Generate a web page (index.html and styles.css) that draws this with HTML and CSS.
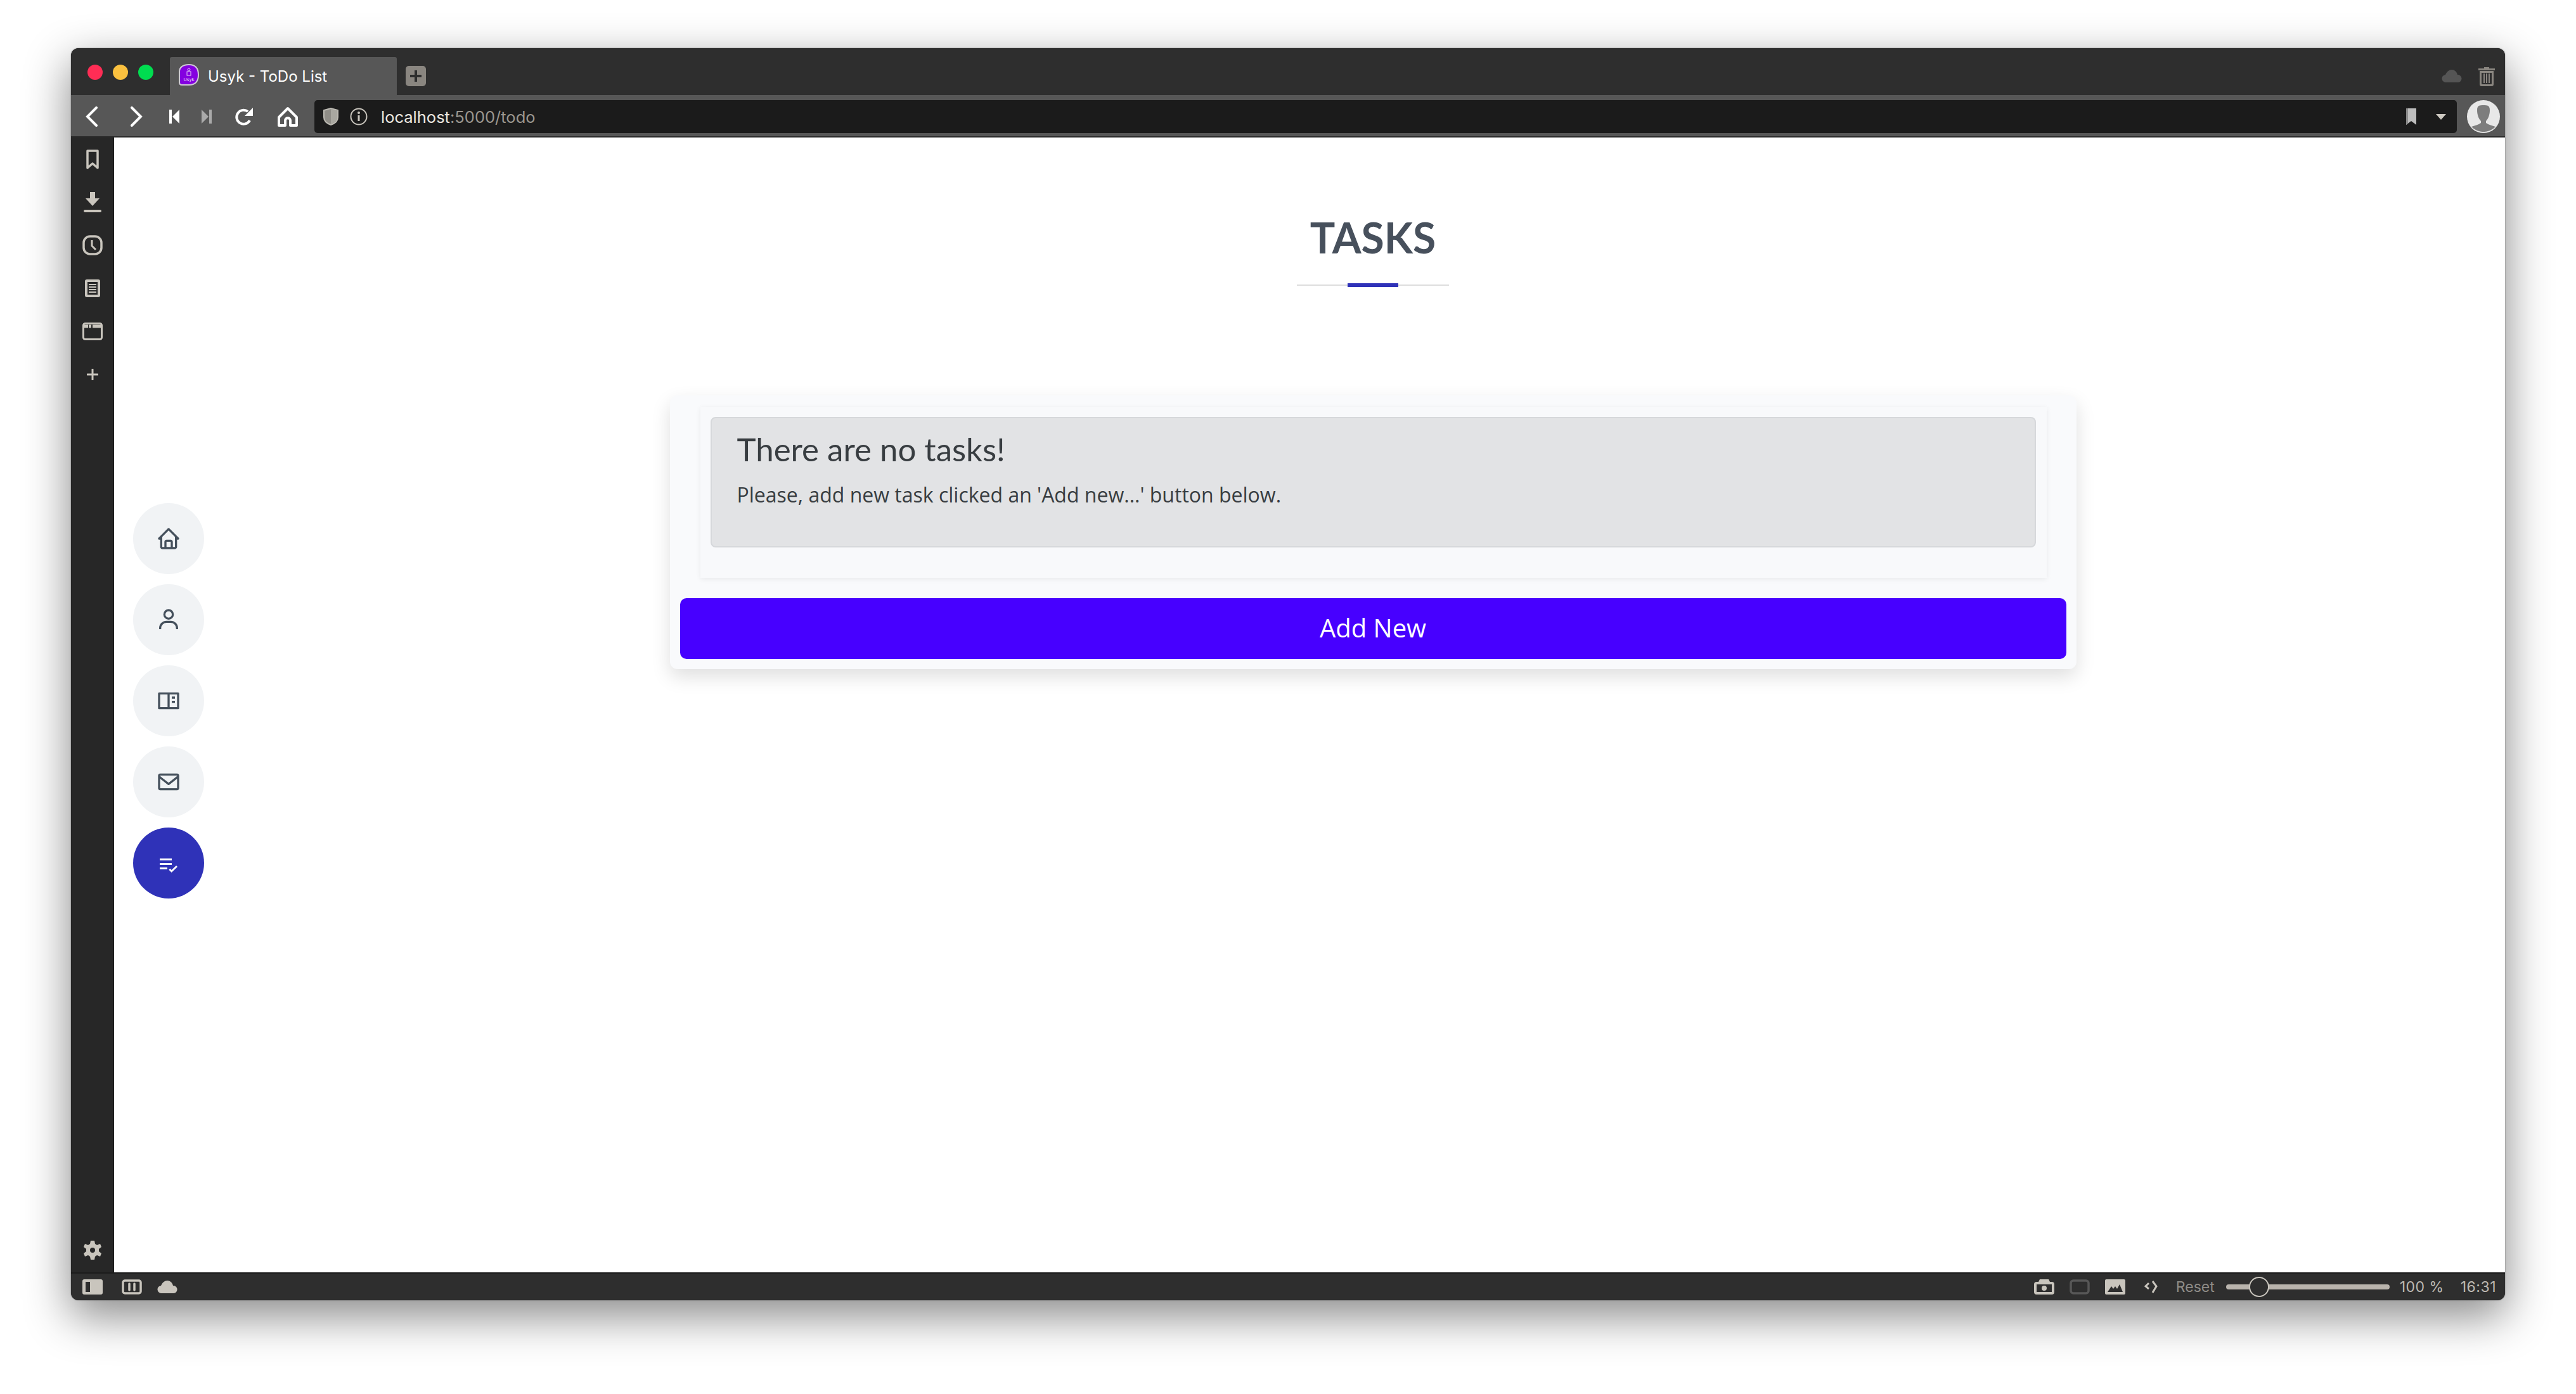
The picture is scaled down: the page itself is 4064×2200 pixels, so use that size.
FILE: index.html
```html
<!DOCTYPE html>
<html lang="en">
<head>
    <meta charset="UTF-8">
    <title>Usyk - ToDo List</title>
    <link rel="stylesheet" href="styles.css">
</head>
<body>
    <div class="window">
        <!-- tab strip -->
        <div class="tabbar">
            <div class="lights">
                <span class="light red"></span>
                <span class="light yellow"></span>
                <span class="light green"></span>
            </div>
            <div class="tab">
                <svg class="favicon" viewBox="0 0 32 34">
                    <path d="M1 12C1 5 7 1 16 1s15 4 15 16-7 16-15 16H5c-3 0-4-1-4-4z" fill="#8400e0" stroke="#cfc6d6" stroke-width="2"/>
                    <circle cx="16" cy="9" r="2" fill="none" stroke="#e6d0f5"/>
                    <rect x="13" y="12" width="6" height="6" fill="none" stroke="#e6d0f5"/>
                    <text x="16" y="27" font-size="8" text-anchor="middle" fill="#e6d0f5" font-family="Roboto, sans-serif">Usyk</text>
                </svg>
                <span class="tab-title">Usyk - ToDo List</span>
            </div>
            <div class="new-tab">
                <svg viewBox="0 0 32 32" width="32" height="32"><path d="M16 7v18M7 16h18" stroke="#2e2e2e" stroke-width="4"/></svg>
            </div>
            <div class="tabbar-right">
                <svg viewBox="0 0 32 20" width="32" height="20"><path d="M7 20a6 6 0 0 1-1-12c2-5 6-8 10-8s8 3 9 8a6 6 0 0 1 1 12z" fill="#555"/></svg>
                <svg viewBox="0 0 26 32" width="26" height="32"><path d="M9 2h8v2h9v3H0V4h9zM2 8h22v21c0 2-1 3-3 3H5c-2 0-3-1-3-3zm3 3v16c0 1 0 2 1 2h14c1 0 1-1 1-2V11zm3 1h2v15H8zm4 0h2v15h-2zm4 0h2v15h-2z" fill="#8a8680"/></svg>
            </div>
        </div>

        <!-- toolbar -->
        <div class="toolbar">
            <div class="nav-btns">
                <svg class="btn-back" viewBox="0 0 20 32" width="20" height="32"><path d="M17 2 3 16l14 14" fill="none" stroke="#fff" stroke-width="4" stroke-linecap="round"/></svg>
                <svg class="btn-forward" viewBox="0 0 20 32" width="20" height="32"><path d="m3 2 14 14L3 30" fill="none" stroke="#fff" stroke-width="4" stroke-linecap="round"/></svg>
                <svg class="btn-first" viewBox="0 0 17 24" width="17" height="24"><path d="M1 1h4v22H1zM17 1v22L6 12z" fill="#fff"/></svg>
                <svg class="btn-last" viewBox="0 0 17 24" width="17" height="24"><path d="M12 1h4v22h-4zM0 1v22l11-11z" fill="#aaa"/></svg>
                <svg class="btn-reload" viewBox="0 0 30 30" width="30" height="30"><path d="M24 21a11 11 0 1 1-3-14" fill="none" stroke="#fff" stroke-width="4"/><path d="M29 1v13H16z" fill="#fff"/></svg>
                <svg class="btn-home" viewBox="0 0 32 32" width="32" height="32"><path d="M16 3 2 17v13h10v-8c0-5 8-5 8 0v8h10V17z" fill="none" stroke="#fff" stroke-width="4" stroke-linejoin="round"/></svg>
            </div>
            <div class="address">
                <svg viewBox="0 0 24 28" width="24" height="28"><path d="M12 1 1 4v11c0 6 5 10 11 12 6-2 11-6 11-12V4z" fill="#8f8d87" stroke="#bdbab3" stroke-width="2"/><path d="M12 2v24c5-2 10-5 10-11V4z" fill="#a9a7a0"/></svg>
                <svg class="info" viewBox="0 0 28 28" width="28" height="28"><circle cx="14" cy="14" r="12.5" fill="none" stroke="#c9c5bd" stroke-width="2"/><path d="M14 12v9" stroke="#c9c5bd" stroke-width="3"/><circle cx="14" cy="8" r="2" fill="#c9c5bd"/></svg>
                <span class="url"><span class="url-host">localhost</span>:5000/todo</span>
                <svg class="addr-mark" viewBox="0 0 16 26" width="16" height="26"><path d="M0 0h16v26l-8-6-8 6z" fill="#bdbdbd"/><path d="M0 0h3v24l-3 2z" fill="#8c8c8c"/></svg>
                <svg class="addr-arrow" viewBox="0 0 16 9" width="16" height="9"><path d="M0 0h16L8 9z" fill="#cdc9c1"/></svg>
            </div>
            <svg class="avatar" viewBox="0 0 52 52" width="52" height="52">
                <circle cx="26" cy="26" r="26" fill="#e8e8e8"/>
                <path d="M16 16c0-8 4-8 10-8s10 0 10 8c0 8-3 14-6 17v3c4 3 10 4 15 6a26 26 0 0 1-38 0c5-2 11-3 15-6v-3c-3-3-6-9-6-17z" fill="#7d7d7d"/>
            </svg>
        </div>

        <div class="main">
            <!-- browser side panel -->
            <div class="sidebar">
                <div class="side-icon"><svg viewBox="0 0 20 31" width="20" height="31"><path d="M2 2h16v27l-8-7-8 7z" fill="none" stroke="#c9c5bd" stroke-width="3.5" stroke-linejoin="round"/></svg></div>
                <div class="side-icon"><svg viewBox="0 0 28 32" width="28" height="32"><path d="M10 0h8v10h7L14 22 3 10h7z" fill="#c9c5bd"/><rect y="28" width="28" height="4" rx="2" fill="#c9c5bd"/></svg></div>
                <div class="side-icon"><svg viewBox="0 0 32 32" width="32" height="32"><rect x="2" y="2" width="28" height="28" rx="10" fill="none" stroke="#c9c5bd" stroke-width="3.5"/><path d="M15 8v9l6 6" fill="none" stroke="#c9c5bd" stroke-width="3"/></svg></div>
                <div class="side-icon"><svg viewBox="0 0 24 28" width="24" height="28"><rect width="24" height="28" rx="3" fill="#c9c5bd"/><rect x="4" y="4" width="16" height="20" fill="#272727"/><path d="M6 8h12M6 12h12M6 16h12M6 20h12" stroke="#c9c5bd" stroke-width="2"/></svg></div>
                <div class="side-icon"><svg viewBox="0 0 32 28" width="32" height="28"><rect x="1.500" y="1.500" width="29" height="25" rx="3" fill="none" stroke="#c9c5bd" stroke-width="3"/><path d="M3 6h27" stroke="#c9c5bd" stroke-width="5" stroke-dasharray="6 1 4 2 20"/></svg></div>
                <div class="side-icon"><svg viewBox="0 0 18 18" width="18" height="18"><path d="M9 1v16M1 9h16" stroke="#c9c5bd" stroke-width="3" stroke-linecap="round"/></svg></div>
                <div class="side-gear">
                    <svg viewBox="0 0 28 30" width="28" height="30"><path fill-rule="evenodd" d="M11 0h6l1 5 3 2 5-2 2 5-4 3v4l4 3-2 5-5-2-3 2-1 5h-6l-1-5-3-2-5 2-2-5 4-3v-4l-4-3 2-5 5 2 3-2zm3 11a4 4 0 1 0 0 8 4 4 0 0 0 0-8z" fill="#c9c5bd"/></svg>
                </div>
            </div>

            <!-- the page itself -->
            <div class="page">
                <nav class="page-nav">
                    <a class="nav-circle"><svg viewBox="0 0 24 24" width="40" height="40"><path d="M3 13h1v7c0 1.103.897 2 2 2h12c1.103 0 2-.897 2-2v-7h1a1 1 0 0 0 .707-1.707l-9-9a.999.999 0 0 0-1.414 0l-9 9A1 1 0 0 0 3 13zm7 7v-5h4v5h-4zm2-15.586 6 6V15l.001 5H16v-5c0-1.103-.897-2-2-2h-4c-1.103 0-2 .897-2 2v5H6v-9.586l6-6z"/></svg></a>
                    <a class="nav-circle"><svg viewBox="0 0 24 24" width="40" height="40"><path d="M12 2a5 5 0 1 0 5 5 5 5 0 0 0-5-5zm0 8a3 3 0 1 1 3-3 3 3 0 0 1-3 3zm9 11v-1a7 7 0 0 0-7-7h-4a7 7 0 0 0-7 7v1h2v-1a5 5 0 0 1 5-5h4a5 5 0 0 1 5 5v1z"/></svg></a>
                    <a class="nav-circle"><svg viewBox="0 0 24 24" width="40" height="40"><path fill-rule="evenodd" d="M3 4h18a1 1 0 0 1 1 1v14a1 1 0 0 1-1 1H3a1 1 0 0 1-1-1V5a1 1 0 0 1 1-1zm1 2v12h7V6zm9 0v12h7V6zm2 2h3v2h-3zm0 4h3v2h-3z"/></svg></a>
                    <a class="nav-circle"><svg viewBox="0 0 24 24" width="40" height="40"><path d="M20 4H4c-1.103 0-2 .897-2 2v12c0 1.103.897 2 2 2h16c1.103 0 2-.897 2-2V6c0-1.103-.897-2-2-2zm0 2v.511l-8 6.223-8-6.222V6h16zM4 18V9.044l7.386 5.745a.994.994 0 0 0 1.228 0L20 9.044 20.002 18H4z"/></svg></a>
                    <a class="nav-circle active"><svg viewBox="0 0 24 24" width="40" height="40"><path d="M3.600 7.600H15v1.800H3.600zM3.600 12H15v1.800H3.600zM3.600 16.200h7.200V18H3.600z"/><path d="m12.800 17.800 2 2 5-4.800" fill="none" stroke="#fff" stroke-width="1.700"/></svg></a>
                </nav>

                <div class="content">
                    <h1 class="title">TASKS</h1>
                    <div class="title-rule"><span class="title-accent"></span></div>

                    <div class="card">
                        <div class="panel">
                            <div class="alert">
                                <h4 class="alert-title">There are no tasks!</h4>
                                <p class="alert-text">Please, add new task clicked an 'Add new...' button below.</p>
                            </div>
                        </div>
                        <button class="add-btn">Add New</button>
                    </div>
                </div>
            </div>
        </div>

        <!-- status bar -->
        <div class="statusbar">
            <svg viewBox="0 0 32 24" width="32" height="24"><path fill-rule="evenodd" d="M3 0h26a3 3 0 0 1 3 3v18a3 3 0 0 1-3 3H3a3 3 0 0 1-3-3V3a3 3 0 0 1 3-3zm2 4v16h7V4z" fill="#c9c5bd"/></svg>
            <svg class="status-tiles" viewBox="0 0 32 24" width="32" height="24"><rect x="2" y="2" width="28" height="20" rx="3" fill="none" stroke="#c9c5bd" stroke-width="3.500"/><path d="M12 7v10M20 7v10" stroke="#c9c5bd" stroke-width="3.500" stroke-linecap="round"/></svg>
            <svg class="status-cloud" viewBox="0 0 32 20" width="32" height="20"><path d="M7 20a6 6 0 0 1-1-12c2-5 6-8 10-8s8 3 9 8a6 6 0 0 1 1 12z" fill="#c9c5bd"/></svg>

            <div class="status-right">
                <svg viewBox="0 0 32 24" width="32" height="24"><path fill-rule="evenodd" d="M9 0h14l2 4h3a4 4 0 0 1 4 4v12a4 4 0 0 1-4 4H4a4 4 0 0 1-4-4V8a4 4 0 0 1 4-4h3zM4 8v12h24V8zm12 2a4 4 0 1 0 0 8 4 4 0 0 0 0-8z" fill="#c9c5bd"/></svg>
                <svg class="status-gap" viewBox="0 0 32 24" width="32" height="24"><rect x="2" y="2" width="28" height="20" rx="4" fill="none" stroke="#575757" stroke-width="3.500"/></svg>
                <svg class="status-gap" viewBox="0 0 32 24" width="32" height="24"><path fill-rule="evenodd" d="M2 0h28a2 2 0 0 1 2 2v20a2 2 0 0 1-2 2H2a2 2 0 0 1-2-2V2a2 2 0 0 1 2-2zm2 20h24l-5-12-4 7-3-4-3 4-3-4z" fill="#c9c5bd"/></svg>
                <svg class="status-code" viewBox="0 0 23 24" width="23" height="24"><path d="M8 6 3 11l5 4M14 3l6 8-6 10" fill="none" stroke="#c9c5bd" stroke-width="3"/></svg>
                <span class="status-reset">Reset</span>
                <div class="slider"><span class="slider-thumb"></span></div>
                <span class="status-text zoom-val">100 %</span>
                <span class="status-text clock">16:31</span>
            </div>
        </div>
    </div>
</body>
</html>
```

FILE: styles.css
```css
* {
    box-sizing: border-box;
}

html, body {
    margin: 0;
    height: 2200px;
    background-color: #fff;
}

body {
    padding: 76px 112px 148px;
    overflow: hidden;
    font-family: Inter, sans-serif;
}

svg {
    display: block;
    flex-shrink: 0;
}

.window {
    display: flex;
    flex-direction: column;
    height: 100%;
    border-radius: 12px;
    background-color: #2e2e2e;
    box-shadow: 0 24px 70px 2px rgba(0, 0, 0, 0.46), 0 0 2px rgba(0, 0, 0, 0.5);
}

/* Tab strip */
.tabbar {
    display: flex;
    align-items: flex-end;
    height: 74px;
    flex-shrink: 0;
    background-color: #2e2e2e;
    border-radius: 12px 12px 0 0;
}

.lights {
    display: flex;
    gap: 16px;
    align-self: flex-start;
    padding: 26px 0 0 26px;
    width: 156px;
}

.light {
    width: 24px;
    height: 24px;
    border-radius: 50%;
}

.red { background-color: #ff2d55; }
.yellow { background-color: #fbc13f; }
.green { background-color: #00dd50; }

.tab {
    display: flex;
    align-items: center;
    gap: 14px;
    width: 358px;
    height: 60px;
    padding: 0 0 4px 14px;
    background-color: #575757;
    border-radius: 3px 3px 0 0;
}

.favicon {
    width: 32px;
    height: 34px;
}

.tab-title {
    padding-top: 4px;
    color: #fff;
    font-size: 24px;
}

.new-tab {
    align-self: flex-start;
    margin: 28px 0 0 14px;
    background-color: #8a8680;
    border-radius: 5px;
}

.tabbar-right {
    display: flex;
    align-items: center;
    gap: 26px;
    margin-left: auto;
    align-self: flex-start;
    padding: 28px 16px 0 0;
}

/* Toolbar */
.toolbar {
    display: flex;
    align-items: center;
    height: 67px;
    flex-shrink: 0;
    padding-top: 3px;
    background-color: #575757;
    border-bottom: 2px solid #2a2a2a;
}

.nav-btns {
    display: flex;
    align-items: center;
    width: 384px;
    padding-left: 23px;
}

.btn-forward { margin-left: 50px; }
.btn-first { margin-left: 41px; }
.btn-last { margin-left: 35px; }
.btn-reload { margin-left: 35px; }
.btn-home { margin-left: 38px; }

.address {
    display: flex;
    align-items: center;
    width: 3380px;
    height: 52px;
    padding: 0 17px 0 14px;
    background-color: #1b1b1b;
    border-radius: 5px;
}

.info {
    margin-left: 18px;
}

.url {
    margin-left: 21px;
    color: #9a968f;
    font-size: 25.5px;
}

.url-host {
    color: #ece8e0;
}

.addr-mark {
    margin-left: auto;
}

.addr-arrow {
    margin-left: 31px;
}

.avatar {
    margin-left: 16px;
}

/* Middle part */
.main {
    display: flex;
    flex: 1;
    min-height: 0;
}

.sidebar {
    display: flex;
    flex-direction: column;
    width: 68px;
    flex-shrink: 0;
    padding-left: 2px;
    background-color: #272727;
    border-right: 2px solid #1e1e1e;
}

.side-icon {
    display: flex;
    align-items: center;
    justify-content: center;
    height: 68px;
}

.side-gear {
    display: flex;
    justify-content: center;
    margin-top: auto;
    padding-bottom: 20px;
}

.page {
    display: flex;
    flex: 1;
    background-color: #fff;
}

.page-nav {
    display: flex;
    flex-direction: column;
    gap: 16px;
    width: 200px;
    flex-shrink: 0;
    padding: 577px 0 0 30px;
}

.nav-circle {
    display: flex;
    align-items: center;
    justify-content: center;
    width: 112px;
    height: 112px;
    border-radius: 50%;
    background-color: #f1f3f5;
    fill: #45505c;
}

.nav-circle.active {
    background-color: #2f32b8;
    fill: #fff;
}

.content {
    flex: 1;
    display: flex;
    flex-direction: column;
    align-items: center;
    padding-top: 120px;
}

.title {
    margin: 0;
    color: #47505c;
    font-family: Lato, sans-serif;
    font-size: 66px;
    font-weight: 700;
    line-height: 76px;
}

.title-rule {
    display: flex;
    justify-content: center;
    align-items: center;
    width: 240px;
    height: 2px;
    margin-top: 36px;
    background-color: #ddd;
}

.title-accent {
    width: 80px;
    height: 6px;
    background-color: #2f32b8;
}

.card {
    width: 2219px;
    margin-top: 173px;
    padding: 18px 16px 16px;
    background-color: #f9fafc;
    border-radius: 12px;
    box-shadow: 0 12px 30px rgba(0, 0, 0, 0.13);
}

.panel {
    margin: 0 31px 32px 32px;
    padding: 16px 17px 48px 16px;
    background-color: #f8f9fb;
    box-shadow: 0 2px 8px rgba(0, 0, 0, 0.07);
}

.alert {
    height: 206px;
    padding: 19px 40px;
    color: #383d41;
    background-color: #e2e3e5;
    border: 2px solid #d6d8db;
    border-radius: 8px;
}

.alert-title {
    margin: 0;
    font-family: Lato, sans-serif;
    font-size: 51px;
    font-weight: 400;
    line-height: 60px;
}

.alert-text {
    margin: 18px 0 0;
    font-family: "Open Sans", sans-serif;
    font-size: 32px;
    line-height: 48px;
}

.add-btn {
    display: block;
    width: 100%;
    height: 96px;
    padding: 0 0 3px;
    color: #fff;
    background-color: #4700ff;
    border: none;
    border-radius: 10px;
    font-family: "Open Sans", sans-serif;
    font-size: 40px;
}

/* Status bar */
.statusbar {
    display: flex;
    align-items: center;
    height: 44px;
    flex-shrink: 0;
    padding-left: 18px;
    background-color: #2e2e2e;
    border-top: 2px solid #1c1c1c;
    border-radius: 0 0 12px 12px;
}

.status-tiles { margin-left: 30px; }
.status-cloud { margin-left: 24px; }

.status-right {
    display: flex;
    align-items: center;
    margin-left: auto;
    padding-right: 14px;
}

.status-gap { margin-left: 24px; }
.status-code { margin-left: 29px; }

.status-reset {
    margin-left: 28px;
    color: #8f8c87;
    font-size: 23px;
}

.slider {
    position: relative;
    width: 258px;
    height: 8px;
    margin-left: 18px;
    background-color: #b9b4ad;
    border-radius: 4px;
}

.slider-thumb {
    position: absolute;
    top: -12px;
    left: 36px;
    width: 32px;
    height: 32px;
    background-color: #2e2e2e;
    border: 2px solid #c9c5bd;
    border-radius: 50%;
}

.status-text {
    color: #bdb9b2;
    font-size: 23px;
    letter-spacing: 0.5px;
}

.zoom-val { margin-left: 16px; }
.clock { margin-left: 26px; }
```
